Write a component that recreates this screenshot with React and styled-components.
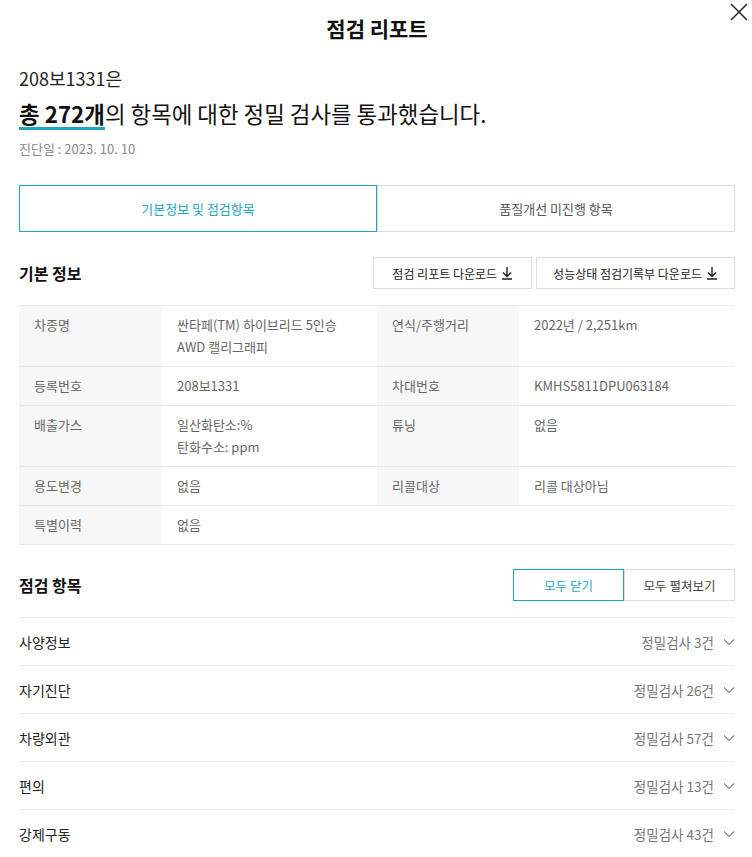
import React, { useState } from "react";
import styled, { createGlobalStyle } from "styled-components";

const TEAL = "#1ea5c3";

const GlobalStyle = createGlobalStyle`
  body {
    margin: 0;
    background: #fff;
    font-family: "Noto Sans CJK KR", "Noto Sans", sans-serif;
    color: #222;
  }
`;

const Modal = styled.div`
  position: relative;
  padding: 0 17px 40px 19px;
`;

const Header = styled.h1`
  margin: 0;
  height: 55px;
  display: flex;
  align-items: center;
  justify-content: center;
  font-size: 21px;
  font-weight: 700;
  color: #111;
`;

const CloseButton = styled.button`
  position: absolute;
  top: 3px;
  right: 4px;
  width: 18px;
  height: 18px;
  padding: 0;
  border: none;
  background: transparent;
  cursor: pointer;
`;

const CarNo = styled.p`
  margin: 11px 0 0;
  font-size: 18px;
  line-height: 24px;
  color: #222;
`;

const Headline = styled.p`
  margin: 7px 0 0;
  font-size: 22.4px;
  line-height: 32px;
  color: #111;
`;

const Strong = styled.strong`
  font-weight: 700;
  text-decoration: underline;
  text-decoration-color: ${TEAL};
  text-decoration-thickness: 3px;
  text-underline-offset: 4px;
`;

const DiagDate = styled.p`
  margin: 10px 0 0;
  font-size: 13px;
  line-height: 20px;
  color: #888;
`;

const Tabs = styled.div`
  display: grid;
  grid-template-columns: 1fr 1fr;
  margin-top: 26px;
`;

const Tab = styled.button`
  height: 47px;
  padding: 0;
  border: none;
  background: #fff;
  font-family: inherit;
  font-size: 13px;
  cursor: pointer;
  color: ${(p) => (p.$active ? TEAL : "#555")};
  box-shadow: inset 0 0 0 1px ${(p) => (p.$active ? TEAL : "#ddd")};
`;

const SectionHead = styled.div`
  display: flex;
  align-items: center;
  justify-content: space-between;
  margin-top: ${(p) => p.$top}px;
`;

const SectionTitle = styled.h2`
  margin: 0;
  font-size: 16px;
  font-weight: 700;
  color: #111;
`;

const ButtonRow = styled.div`
  display: flex;
  gap: 4px;
`;

const DownloadButton = styled.button`
  display: flex;
  align-items: center;
  gap: 4px;
  height: 32px;
  padding: 0 ${(p) => p.$pad}px;
  background: #fff;
  border: 1px solid #ddd;
  font-family: inherit;
  font-size: 12px;
  color: #222;
  cursor: pointer;
`;

const Toggle = styled.div`
  display: flex;
`;

const ToggleButton = styled.button`
  width: 111px;
  height: 32px;
  padding: 0;
  border: none;
  background: #fff;
  font-family: inherit;
  font-size: 12.5px;
  cursor: pointer;
  color: ${(p) => (p.$active ? TEAL : "#444")};
  box-shadow: inset 0 0 0 1px ${(p) => (p.$active ? TEAL : "#ddd")};
`;

const InfoTable = styled.div`
  margin-top: 16px;
  display: grid;
  grid-template-columns: 143px 215px 142px 1fr;
  border-top: 1px solid #e8e8e8;
`;

const Cell = styled.div`
  padding: 8px 15px;
  font-size: 13px;
  line-height: 22px;
  border-bottom: 1px solid #e8e8e8;
  background: ${(p) => (p.$label ? "#f7f7f7" : "#fff")};
  color: #666;
  grid-column: ${(p) => p.$span || "auto"};
`;

const List = styled.ul`
  list-style: none;
  margin: 16px 0 0;
  padding: 0;
`;

const ListItem = styled.li`
  display: flex;
  align-items: center;
  justify-content: space-between;
  height: 47px;
  border-top: 1px solid #e8e8e8;
  font-size: 14px;
  color: #222;
  cursor: pointer;
`;

const Count = styled.span`
  display: flex;
  align-items: center;
  gap: 9px;
  font-size: 13.5px;
  color: #777;
`;

const DownloadIcon = () => (
  <svg width="12" height="14" viewBox="0 0 12 14" fill="none" stroke="#222" strokeWidth="1.4">
    <path d="M6 1v9M2 6.5l4 4 4-4M1 13h10" />
  </svg>
);

const Chevron = () => (
  <svg width="12" height="8" viewBox="0 0 12 8" fill="none" stroke="#888" strokeWidth="1.2">
    <path d="M1 1.5l5 5 5-5" />
  </svg>
);

const info = [
  ["차종명", ["싼타페(TM) 하이브리드 5인승", "AWD 캘리그래피"], "연식/주행거리", ["2022년 / 2,251km"]],
  ["등록번호", ["208보1331"], "차대번호", ["KMHS5811DPU063184"]],
  ["배출가스", ["일산화탄소:%", "탄화수소: ppm"], "튜닝", ["없음"]],
  ["용도변경", ["없음"], "리콜대상", ["리콜 대상아님"]],
  ["특별이력", ["없음"]],
];

const items = [
  ["사양정보", 3],
  ["자기진단", 26],
  ["차량외관", 57],
  ["편의", 13],
  ["강제구동", 43],
];

const Lines = ({ lines }) => lines.map((l, i) => <div key={i}>{l}</div>);

export default function App() {
  const [tab, setTab] = useState(0);
  const [open, setOpen] = useState(false);

  return (
    <Modal>
      <GlobalStyle />
      <Header>점검 리포트</Header>
      <CloseButton aria-label="닫기">
        <svg width="18" height="18" viewBox="0 0 18 18" stroke="#222" strokeWidth="1.5">
          <path d="M1 1l16 16M17 1L1 17" />
        </svg>
      </CloseButton>

      <CarNo>208보1331은</CarNo>
      <Headline>
        <Strong>총 272개</Strong>의 항목에 대한 정밀 검사를 통과했습니다.
      </Headline>
      <DiagDate>진단일 : 2023. 10. 10</DiagDate>

      <Tabs>
        <Tab $active={tab === 0} onClick={() => setTab(0)}>기본정보 및 점검항목</Tab>
        <Tab $active={tab === 1} onClick={() => setTab(1)}>품질개선 미진행 항목</Tab>
      </Tabs>

      <SectionHead $top={25}>
        <SectionTitle>기본 정보</SectionTitle>
        <ButtonRow>
          <DownloadButton $pad={18}>점검 리포트 다운로드 <DownloadIcon /></DownloadButton>
          <DownloadButton $pad={16}>성능상태 점검기록부 다운로드 <DownloadIcon /></DownloadButton>
        </ButtonRow>
      </SectionHead>

      <InfoTable>
        {info.map((row) => (
          <React.Fragment key={row[0]}>
            <Cell $label>{row[0]}</Cell>
            <Cell $span={row[2] ? "auto" : "2 / 5"}><Lines lines={row[1]} /></Cell>
            {row[2] && <Cell $label>{row[2]}</Cell>}
            {row[2] && <Cell><Lines lines={row[3]} /></Cell>}
          </React.Fragment>
        ))}
      </InfoTable>

      <SectionHead $top={24}>
        <SectionTitle>점검 항목</SectionTitle>
        <Toggle>
          <ToggleButton $active={!open} onClick={() => setOpen(false)}>모두 닫기</ToggleButton>
          <ToggleButton $active={open} onClick={() => setOpen(true)}>모두 펼쳐보기</ToggleButton>
        </Toggle>
      </SectionHead>

      <List>
        {items.map(([name, n]) => (
          <ListItem key={name}>
            {name}
            <Count>
              정밀검사 {n}건
              <Chevron />
            </Count>
          </ListItem>
        ))}
      </List>
    </Modal>
  );
}
